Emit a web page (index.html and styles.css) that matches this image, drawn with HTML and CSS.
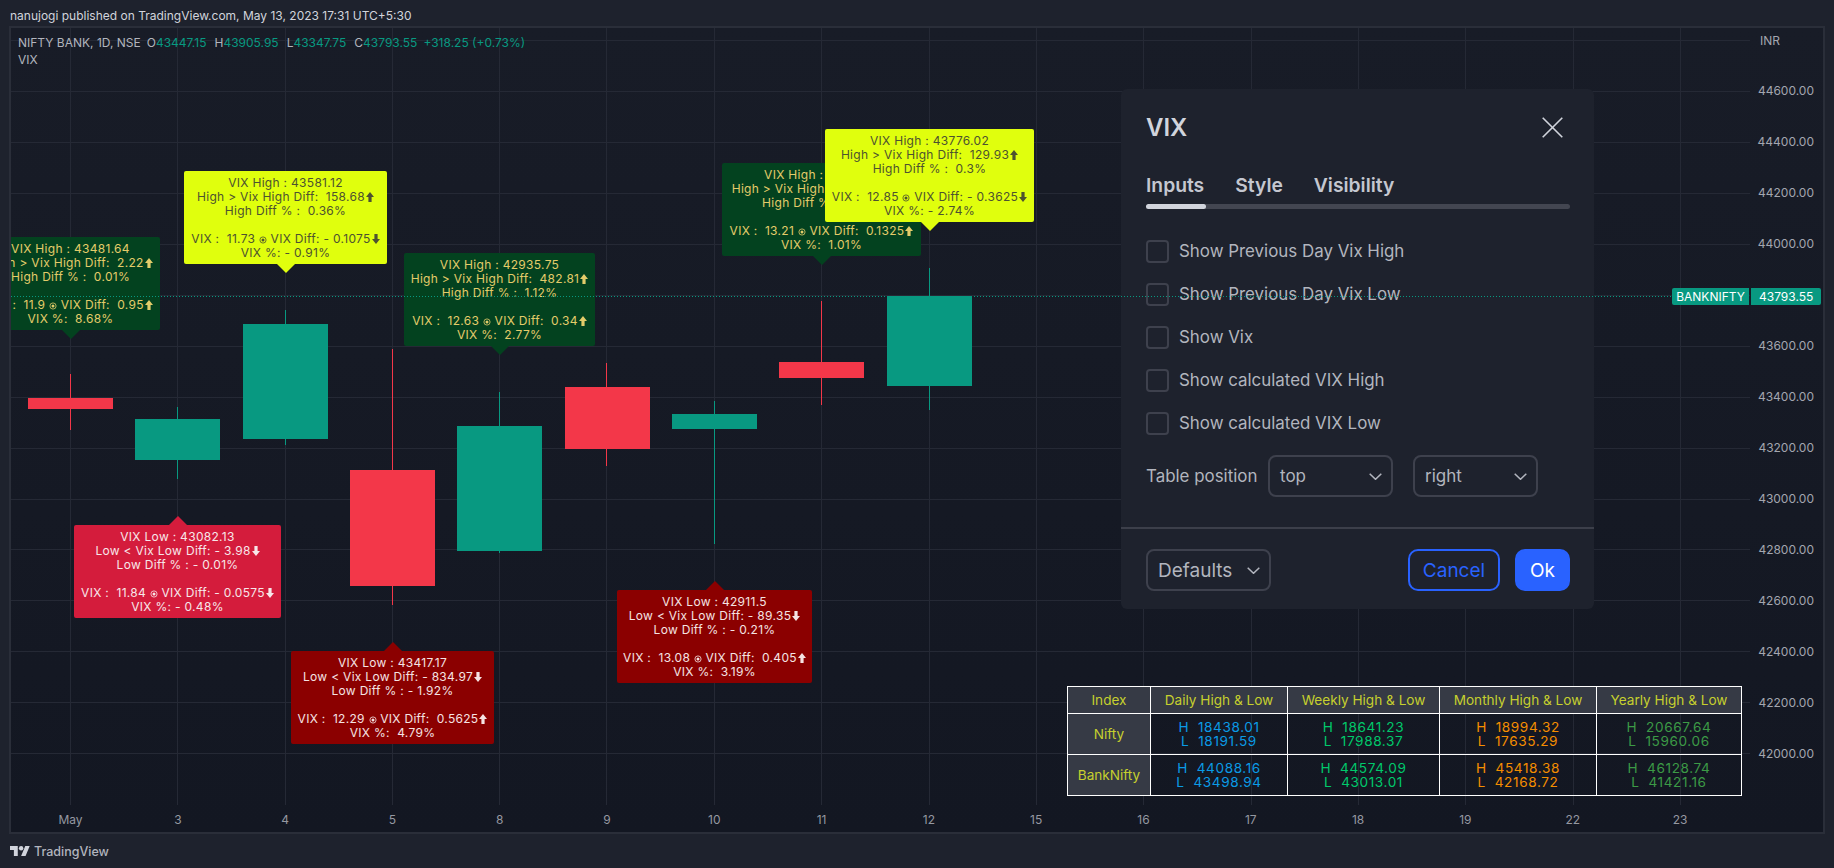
FILE: index.html
```html
<!DOCTYPE html>
<html lang="en">
<head>
<meta charset="utf-8">
<title>VIX on TradingView</title>
<link rel="stylesheet" href="styles.css">
</head>
<body>
<svg class="defs" aria-hidden="true">
  <symbol id="up" viewBox="0 0 8 10"><path d="M4 0l4 5H5.6v5H2.4V5H0z"/></symbol>
  <symbol id="down" viewBox="0 0 8 10"><path d="M4 10l4-5H5.6V0H2.4v5H0z"/></symbol>
  <symbol id="dot" viewBox="0 0 8 8"><circle class="ring" cx="4" cy="4" r="3.1"/><circle cx="4" cy="4" r="1.5"/></symbol>
</svg>
<div class="page">
  <header class="topbar">nanujogi published on TradingView.com, May 13, 2023 17:31 UTC+5:30</header>
  <main class="pane">
    <section class="chart">
      <svg class="plot" viewBox="11 28 1739 777" aria-hidden="true">
        <g class="grid">
          <path d="M11 40.5H1750M11 91.5H1750M11 142.5H1750M11 193.5H1750M11 244.5H1750M11 295.5H1750M11 346.5H1750M11 397.5H1750M11 448.5H1750M11 499.5H1750M11 549.5H1750M11 600.5H1750M11 651.5H1750M11 702.5H1750M11 753.5H1750"/>
          <path d="M70.5 28V805M177.5 28V805M285.5 28V805M392.5 28V805M499.5 28V805M606.5 28V805M714.5 28V805M821.5 28V805M929.5 28V805M1036.5 28V805M1143.5 28V805M1251.5 28V805M1358.5 28V805M1465.5 28V805M1573.5 28V805M1680.5 28V805"/>
        </g>
        <g class="bear">
          <path class="wick" d="M70.5 374V430M392.5 349V605M606.5 363V466M821.5 301V405"/>
          <rect x="28" y="398" width="85" height="11"/>
          <rect x="350" y="470" width="85" height="116"/>
          <rect x="565" y="387" width="85" height="62"/>
          <rect x="779" y="362" width="85" height="16"/>
        </g>
        <g class="bull">
          <path class="wick" d="M177.5 407V479M285.5 310V445M499.5 392V553M714.5 401V544M929.5 268V410"/>
          <rect x="135" y="419" width="85" height="41"/>
          <rect x="243" y="324" width="85" height="115"/>
          <rect x="457" y="426" width="85" height="125"/>
          <rect x="672" y="414" width="85" height="15"/>
          <rect x="887" y="296" width="85" height="90"/>
        </g>
      </svg>

      <div class="legend">
        <div class="legend-row"><span class="legend-name">NIFTY BANK, 1D, NSE</span><span class="ohlc">O<b>43447.15</b></span><span class="ohlc">H<b>43905.95</b></span><span class="ohlc">L<b>43347.75</b></span><span class="ohlc ohlc-last">C<b>43793.55</b></span><b>+318.25 (+0.73%)</b></div>
        <div class="legend-row">VIX</div>
      </div>

      <div class="callout hi-green pos-a">VIX High : 43481.64
High &gt; Vix High Diff:  2.22<svg class="arrow"><use href="#up"/></svg>
High Diff % :  0.01%

VIX :  11.9 <svg class="dot"><use href="#dot"/></svg> VIX Diff:  0.95<svg class="arrow"><use href="#up"/></svg>
VIX %:  8.68%</div>
      <div class="callout hi-yellow pos-b">VIX High : 43581.12
High &gt; Vix High Diff:  158.68<svg class="arrow"><use href="#up"/></svg>
High Diff % :  0.36%

VIX :  11.73 <svg class="dot"><use href="#dot"/></svg> VIX Diff: - 0.1075<svg class="arrow"><use href="#down"/></svg>
VIX %: - 0.91%</div>
      <div class="callout hi-green pos-c">VIX High : 42935.75
High &gt; Vix High Diff:  482.81<svg class="arrow"><use href="#up"/></svg>
High Diff % :  1.12%

VIX :  12.63 <svg class="dot"><use href="#dot"/></svg> VIX Diff:  0.34<svg class="arrow"><use href="#up"/></svg>
VIX %:  2.77%</div>
      <div class="callout hi-green pos-d">VIX High : 43681.15
High &gt; Vix High Diff:  224.80<svg class="arrow"><use href="#up"/></svg>
High Diff % :  0.51%

VIX :  13.21 <svg class="dot"><use href="#dot"/></svg> VIX Diff:  0.1325<svg class="arrow"><use href="#up"/></svg>
VIX %:  1.01%</div>
      <div class="callout hi-yellow pos-e">VIX High : 43776.02
High &gt; Vix High Diff:  129.93<svg class="arrow"><use href="#up"/></svg>
High Diff % :  0.3%

VIX :  12.85 <svg class="dot"><use href="#dot"/></svg> VIX Diff: - 0.3625<svg class="arrow"><use href="#down"/></svg>
VIX %: - 2.74%</div>
      <div class="callout lo-crimson pos-f">VIX Low : 43082.13
Low &lt; Vix Low Diff: - 3.98<svg class="arrow"><use href="#down"/></svg>
Low Diff % : - 0.01%

VIX :  11.84 <svg class="dot"><use href="#dot"/></svg> VIX Diff: - 0.0575<svg class="arrow"><use href="#down"/></svg>
VIX %: - 0.48%</div>
      <div class="callout lo-maroon pos-g">VIX Low : 43417.17
Low &lt; Vix Low Diff: - 834.97<svg class="arrow"><use href="#down"/></svg>
Low Diff % : - 1.92%

VIX :  12.29 <svg class="dot"><use href="#dot"/></svg> VIX Diff:  0.5625<svg class="arrow"><use href="#up"/></svg>
VIX %:  4.79%</div>
      <div class="callout lo-maroon pos-h">VIX Low : 42911.5
Low &lt; Vix Low Diff: - 89.35<svg class="arrow"><use href="#down"/></svg>
Low Diff % : - 0.21%

VIX :  13.08 <svg class="dot"><use href="#dot"/></svg> VIX Diff:  0.405<svg class="arrow"><use href="#up"/></svg>
VIX %:  3.19%</div>

      <table class="levels">
        <colgroup><col class="c0"><col class="c1"><col class="c2"><col class="c3"><col class="c4"></colgroup>
        <tr class="head"><th>Index</th><th>Daily High &amp; Low</th><th>Weekly High &amp; Low</th><th>Monthly High &amp; Low</th><th>Yearly High &amp; Low</th></tr>
        <tr><th>Nifty</th><td class="daily">H  18438.01
L  18191.59</td><td class="weekly">H  18641.23
L  17988.37</td><td class="monthly">H  18994.32
L  17635.29</td><td class="yearly">H  20667.64
L  15960.06</td></tr>
        <tr><th>BankNifty</th><td class="daily">H  44088.16
L  43498.94</td><td class="weekly">H  44574.09
L  43013.01</td><td class="monthly">H  45418.38
L  42168.72</td><td class="yearly">H  46128.74
L  41421.16</td></tr>
      </table>

      <div class="dialog">
        <div class="dialog-head">
          <h1>VIX</h1>
          <svg class="close" viewBox="0 0 21 21" aria-hidden="true"><path d="M.7.7l19.6 19.6M20.3.7L.7 20.3"/></svg>
        </div>
        <div class="tabs"><span>Inputs</span><span>Style</span><span>Visibility</span></div>
        <div class="track"><div class="track-on"></div></div>
        <div class="form">
          <label class="check"><i></i>Show Previous Day Vix High</label>
          <label class="check"><i></i>Show Previous Day Vix Low</label>
          <label class="check"><i></i>Show Vix</label>
          <label class="check"><i></i>Show calculated VIX High</label>
          <label class="check"><i></i>Show calculated VIX Low</label>
          <div class="position">
            <span class="position-label">Table position</span>
            <div class="select">top<svg viewBox="0 0 13 7" aria-hidden="true"><path d="M.7.7l5.8 5.6L12.3.7"/></svg></div>
            <div class="select">right<svg viewBox="0 0 13 7" aria-hidden="true"><path d="M.7.7l5.8 5.6L12.3.7"/></svg></div>
          </div>
        </div>
        <div class="dialog-foot">
          <div class="select defaults">Defaults<svg viewBox="0 0 13 7" aria-hidden="true"><path d="M.7.7l5.8 5.6L12.3.7"/></svg></div>
          <div class="actions"><button class="btn cancel">Cancel</button><button class="btn ok">Ok</button></div>
        </div>
      </div>

      <div class="last-line"></div>
      <div class="symbol-tag">BANKNIFTY</div>
    </section>

    <aside class="price-axis">
      <div class="ticks">
        <span class="unit">INR</span><span>44600.00</span><span>44400.00</span><span>44200.00</span><span>44000.00</span><span>43800.00</span><span>43600.00</span><span>43400.00</span><span>43200.00</span><span>43000.00</span><span>42800.00</span><span>42600.00</span><span>42400.00</span><span>42200.00</span><span>42000.00</span>
      </div>
      <div class="price-tag">43793.55</div>
    </aside>

    <nav class="time-axis">
      <span>May</span><span>3</span><span>4</span><span>5</span><span>8</span><span>9</span><span>10</span><span>11</span><span>12</span><span>15</span><span>16</span><span>17</span><span>18</span><span>19</span><span>22</span><span>23</span>
    </nav>
  </main>
  <footer class="footer">
    <svg class="logo" viewBox="0 4 36 18" aria-hidden="true"><path d="M14 22H7V11H0V4h14v18zM28 22h-8l7.5-18h8L28 22z"/><circle cx="20" cy="8" r="4"/></svg>
    <span class="brand">TradingView</span>
  </footer>
</div>
</body>
</html>
```
FILE: styles.css
```css
* { box-sizing: border-box; }
html, body { margin: 0; padding: 0; }
body {
  background: #1e222d;
  color: #b2b5be;
  font-family: Inter, "DejaVu Sans", sans-serif;
  font-size: 12px;
  overflow: hidden;
}
.defs { position: absolute; width: 0; height: 0; }
.page {
  display: flex;
  flex-direction: column;
  width: 1834px;
  height: 868px;
  padding: 0 9px;
}
.topbar {
  height: 26px;
  padding: 0 1px;
  font-size: 12px;
  line-height: 31px;
  color: #d1d4dc;
  white-space: nowrap;
}
.pane {
  display: grid;
  grid-template-columns: 1739px 73px;
  grid-template-rows: 777px 27px;
  height: 808px;
  border: 2px solid #2a2e39;
  background: linear-gradient(#181c27, #131722);
  overflow: hidden;
}
.chart { position: relative; overflow: hidden; }
.plot { display: block; width: 1739px; height: 777px; }
.grid path { fill: none; stroke: #252935; stroke-width: 1; }
.bear rect { fill: #f33749; }
.bull rect { fill: #089981; }
.bear .wick { fill: none; stroke: #f33749; }
.bull .wick { fill: none; stroke: #089981; }

.legend { position: absolute; left: 7px; top: 6px; line-height: 17px; color: #b2b5be; white-space: nowrap; }
.legend-row { display: flex; }
.legend b { font-weight: 400; color: #089981; }
.legend-name { margin-right: 6px; }
.ohlc { margin-right: 8px; }
.ohlc-last { margin-right: 6px; }

.callout {
  position: absolute;
  height: 93px;
  padding-top: 5px;
  border-radius: 2px;
  font-size: 12px;
  letter-spacing: .3px;
  line-height: 14px;
  text-align: center;
  white-space: pre;
}
.callout::after {
  content: "";
  position: absolute;
  left: 50%;
  margin-left: -9px;
  border-left: 9px solid transparent;
  border-right: 9px solid transparent;
}
.arrow { width: 8px; height: 10px; margin-left: 1px; vertical-align: -1px; fill: currentColor; }
.dot { width: 8px; height: 8px; vertical-align: -1px; fill: currentColor; }
.dot .ring, symbol .ring { fill: none; stroke: currentColor; stroke-width: .8; }
.hi-green::after, .hi-yellow::after { top: 100%; border-top: 9px solid; }
.lo-crimson::after, .lo-maroon::after { bottom: 100%; border-bottom: 9px solid; }
.hi-green { background: #03421f; color: #e3cc6a; }
.hi-green::after { border-top-color: #03421f; }
.hi-yellow { background: #e0ff0d; color: #4d5230; }
.hi-yellow::after { border-top-color: #e0ff0d; }
.lo-crimson { background: #d41c3c; color: #f7e6e9; }
.lo-crimson::after { border-bottom-color: #d41c3c; }
.lo-maroon { background: #8b0000; color: #f5e3e3; }
.lo-maroon::after { border-bottom-color: #8b0000; }
.pos-a { left: -30px; top: 209px; width: 179px; }
.pos-b { left: 173px; top: 143px; width: 203px; }
.pos-c { left: 393px; top: 225px; width: 191px; }
.pos-d { left: 711px; top: 135px; width: 199px; }
.pos-e { left: 814px; top: 101px; width: 209px; }
.pos-f { left: 63px; top: 497px; width: 207px; }
.pos-g { left: 280px; top: 623px; width: 203px; }
.pos-h { left: 606px; top: 562px; width: 195px; }

.levels {
  position: absolute;
  left: 1056px;
  top: 658px;
  width: 674px;
  border-collapse: collapse;
  table-layout: fixed;
  font-size: 13.6px;
  line-height: 14px;
  text-align: center;
}
.levels th, .levels td {
  border: 1px solid #fff;
  padding: 0;
  font-weight: 400;
  height: 41px;
  white-space: pre;
}
.levels td { letter-spacing: .6px; }
.levels th { background: #363a45; color: #c6d02e; }
.levels .head th { height: 27px; }
.c0 { width: 83px; }
.c1 { width: 137px; }
.c2 { width: 152px; }
.c3 { width: 157px; }
.c4 { width: 145px; }
.daily { color: #0a9be6; }
.weekly { color: #00c96b; }
.monthly { color: #f58e00; }
.yearly { color: #3c9a46; }

.dialog {
  position: absolute;
  left: 1110px;
  top: 61px;
  display: flex;
  flex-direction: column;
  width: 473px;
  height: 520px;
  border-radius: 6px;
  background: #1e222d;
}
.dialog-head {
  display: flex;
  align-items: center;
  justify-content: space-between;
  height: 76px;
  padding: 0 31px 0 25px;
}
.dialog-head h1 { margin: 0; font-size: 24px; font-weight: 600; color: #d1d4dc; }
.close { width: 21px; height: 21px; }
.close path { fill: none; stroke: #d1d4dc; stroke-width: 1.6; }
.tabs {
  display: flex;
  gap: 31px;
  height: 39px;
  padding-left: 25px;
  font-size: 19.3px;
  font-weight: 600;
  line-height: 41px;
  color: #c4c7d0;
}
.track {
  width: 424px;
  height: 5px;
  margin-left: 25px;
  border-radius: 3px;
  background: #434651;
}
.track-on { width: 60px; height: 5px; border-radius: 3px; background: #d1d4dc; }
.form {
  display: flex;
  flex-direction: column;
  gap: 20px;
  height: 320px;
  padding: 31px 0 0 25px;
  border-bottom: 2px solid #3c3f4a;
  font-size: 16.9px;
}
.check { display: flex; align-items: flex-start; height: 23px; line-height: 22px; color: #b2b5be; }
.check i {
  width: 23px;
  height: 23px;
  margin-right: 10px;
  border: 2px solid #3e414d;
  border-radius: 4px;
}
.position { display: flex; align-items: center; gap: 20px; }
.position-label { width: 102px; white-space: nowrap; }
.select {
  display: flex;
  align-items: center;
  justify-content: space-between;
  width: 125px;
  height: 42px;
  padding: 0 9px 0 10px;
  border: 2px solid #3e414d;
  border-radius: 8px;
  color: #b2b5be;
  font-size: 17px;
}
.select svg { width: 13px; height: 7px; }
.select path { fill: none; stroke: #b2b5be; stroke-width: 1.5; }
.dialog-foot {
  display: flex;
  justify-content: space-between;
  padding: 20px 24px 0 25px;
}
.defaults { font-size: 19px; }
.actions { display: flex; gap: 15px; }
.btn {
  height: 42px;
  padding: 0;
  border-radius: 10px;
  border: 2px solid #2962ff;
  font-family: inherit;
  font-size: 19px;
}
.cancel { width: 92px; background: transparent; color: #2962ff; }
.ok { width: 55px; background: #2962ff; color: #fff; }

.last-line {
  position: absolute;
  left: 0;
  top: 268px;
  width: 1661px;
  height: 1px;
  background: repeating-linear-gradient(90deg, #089981 0 1px, transparent 1px 3px);
}
.symbol-tag {
  position: absolute;
  left: 1661px;
  top: 260px;
  width: 77px;
  height: 17px;
  border-radius: 2px 0 0 2px;
  background: #089981;
  color: #fff;
  line-height: 17px;
  text-align: center;
}

.price-axis { position: relative; overflow: hidden; }
.ticks { display: flex; flex-direction: column; margin-top: -14px; }
.ticks span { height: 51px; line-height: 51px; padding-right: 9px; text-align: right; color: #a3a6af; flex: none; }
.ticks .unit { text-align: left; padding-left: 10px; line-height: 53px; }
.price-tag {
  position: absolute;
  left: 1px;
  top: 260px;
  width: 70px;
  height: 17px;
  border-radius: 0 2px 2px 0;
  background: #089981;
  color: #fff;
  line-height: 17px;
  padding-left: 8px;
}

.time-axis {
  grid-column: 1 / -1;
  display: grid;
  grid-template-columns: repeat(16, 107.3px);
  padding-left: 5.9px;
  line-height: 29px;
  text-align: center;
  color: #9598a1;
}

.footer {
  display: flex;
  align-items: center;
  gap: 4px;
  height: 34px;
  padding-left: 1px;
}
.logo { width: 20px; height: 10px; fill: #d1d4dc; }
.brand { font-size: 12.5px; font-weight: 500; color: #b2b5be; }
```
